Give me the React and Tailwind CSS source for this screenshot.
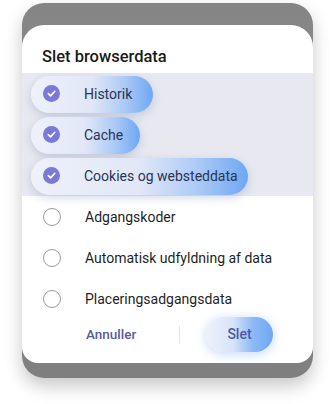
import React from "react";

const Check = () => (
  <div className="w-[17px] h-[17px] rounded-full bg-[#7a79d8] flex items-center justify-center shrink-0">
    <svg width="11" height="11" viewBox="0 0 12 12" fill="none">
      <path d="M2.5 6.2 L5 8.6 L9.6 3.6" stroke="white" strokeWidth="1.8" strokeLinecap="round" strokeLinejoin="round" />
    </svg>
  </div>
);

const Empty = () => (
  <div className="w-[18px] h-[18px] rounded-full border-[1.5px] border-[#9b9b9b] shrink-0 bg-white" />
);

function Row({ label, checked, pillW }) {
  return (
    <div className="relative h-[41px] flex items-center pl-[21px]">
      {checked && (
        <div
          className="absolute left-[9px] top-[3px] h-[37px] rounded-full bg-[linear-gradient(90deg,#eef1fa_0%,#e1e7f7_50%,#adcbf6_76%,#6ea7f3_100%)] shadow-[0_3px_10px_rgba(60,80,140,0.22)]"
          style={{ width: pillW }}
        />
      )}
      <div className="relative flex items-center">
        {checked ? <Check /> : <Empty />}
        <span
          className={
            "ml-[24px] text-[14px] leading-none " +
            (checked ? "text-[#2a3454]" : "text-[#1f1f1f]")
          }
        >
          {label}
        </span>
      </div>
    </div>
  );
}

export default function App() {
  return (
    <div className="w-[336px] h-[404px] bg-white overflow-hidden font-['Roboto','Liberation_Sans',sans-serif]">
      <div className="ml-[22px] mt-[3px] w-[291px] h-[375px] rounded-[22px] bg-[linear-gradient(180deg,#858585_0%,#8d8d8d_50%,#7f7f7f_100%)] pt-[22px] shadow-[0_8px_18px_rgba(0,0,0,0.22)]">
        <div className="h-[338px] bg-white rounded-t-[22px] rounded-b-[16px] overflow-hidden flex flex-col">
          <div className="pt-[24px] pl-[20px] h-[48px] text-[16.5px] font-medium text-[#1a1a1a] leading-none">
            Slet browserdata
          </div>
          <div className="bg-[#e8e9f0] h-[123px]">
            <Row label="Historik" checked pillW={122} />
            <Row label="Cache" checked pillW={109} />
            <Row label="Cookies og websteddata" checked pillW={217} />
          </div>
          <Row label="Adgangskoder" />
          <Row label="Automatisk udfyldning af data" />
          <Row label="Placeringsadgangsdata" />
          <div className="flex items-center h-[30px]">
            <div className="w-[157px] pl-[64px] text-[13.5px] font-medium text-[#5a5a9e]">Annuller</div>
            <div className="w-px h-[17px] bg-[#e6e6e6]" />
            <div className="ml-[26px] relative w-[67px] h-[35px] rounded-full bg-[linear-gradient(90deg,#eef1fa_0%,#d9e4f8_40%,#8db9f5_70%,#6ea7f3_100%)] shadow-[0_2px_12px_rgba(90,140,230,0.35)] flex items-center justify-center">
              <span className="text-[14px] font-medium text-[#4a58a6]">Slet</span>
            </div>
          </div>
        </div>
      </div>
    </div>
  );
}
